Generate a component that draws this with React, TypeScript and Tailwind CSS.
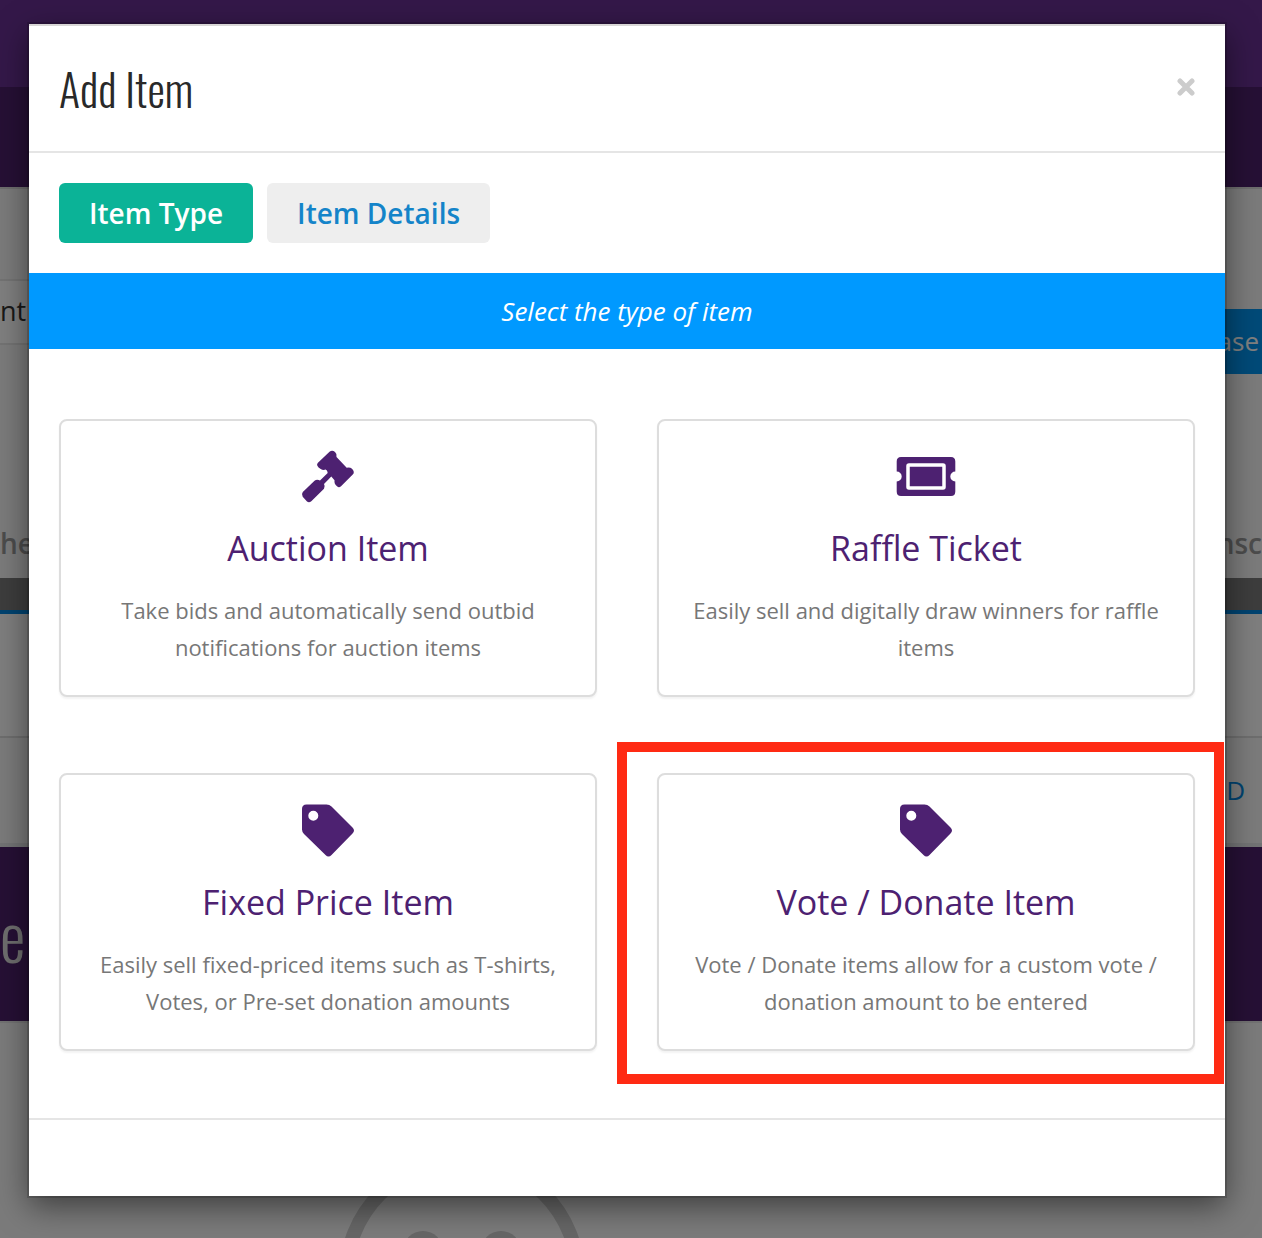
import type { ReactNode } from 'react';

function GavelIcon() {
  return (
    <svg viewBox="0 0 60 60" className="size-[60px]" fill="currentColor" aria-hidden="true">
      <path d="M31.500 4.700Q34.300 2.500 37 5Q39.500 7.300 38.500 10L48.700 20.700Q52 20 54 21.700Q57 25 55 27.300L43 39.300Q41 41 39 39.300Q36 37 36.500 33.200L33.300 29.500L26 37Q27.500 39.500 26 41.700L13.300 54.300Q11 56 9 54.500L4.700 49.700Q3 47.500 4.800 45L16.500 33.700Q19 31.800 22 33.500L29.700 26Q29.500 23.500 27.700 22.600Q25 23.500 22.700 22Q17.500 18.700 19.700 16Z" />
    </svg>
  );
}

function TicketIcon() {
  return (
    <svg viewBox="0 0 60 60" className="size-[60px]" fill="currentColor" aria-hidden="true">
      <path d="M5 10H55Q59.300 10 59.300 14.500V24.500A5 5 0 0 0 59.300 34.500V44.500Q59.300 49 55 49H5Q.700 49 .700 44.500V34.500A5 5 0 0 0 .700 24.500V14.500Q.700 10 5 10Z" />
      <rect x="12" y="18" width="36" height="23" rx="1" fill="none" stroke="#fff" strokeWidth="3.500" />
    </svg>
  );
}

function TagIcon() {
  return (
    <svg viewBox="0 0 60 60" className="size-[60px]" fill="currentColor" aria-hidden="true">
      <path
        fillRule="evenodd"
        d="M8.500 3.500H28.500Q31.500 3.500 33.500 5.500L54.500 26.500Q57.500 29.500 54.500 32.500L33.500 54Q30.500 57 27.500 54L6 33Q4 31 4 28.500V8Q4 3.500 8.500 3.500ZM15.300 9.800A5 5 0 1 0 15.300 19.800A5 5 0 1 0 15.300 9.800Z"
      />
    </svg>
  );
}

type ItemCardProps = {
  icon: ReactNode;
  title: string;
  description: string;
  highlighted?: boolean;
};

function ItemCard({ icon, title, description, highlighted }: ItemCardProps) {
  return (
    <div className="relative">
      <button
        type="button"
        className="flex h-full w-full flex-col items-center rounded-lg border-2 border-[#ddd] bg-white px-7 pt-[26px] pb-[29px] text-center shadow-[0_2px_2px_rgba(0,0,0,0.05)]"
      >
        <span className="text-[#4d2171]">{icon}</span>
        <span className="mt-[18px] text-[34px] leading-[47px] text-[#4d2171]">{title}</span>
        <span className="mt-5 text-[22px] leading-[37px] text-[#777]">{description}</span>
      </button>
      {highlighted && (
        <div className="pointer-events-none absolute -top-[31px] -right-[29px] -bottom-[33px] -left-10 border-10 border-[#ff2a13]"></div>
      )}
    </div>
  );
}

function BackgroundPage() {
  return (
    <div className="bg-[#f6f6f6] text-[26px]" aria-hidden="true">
      <div className="h-[87px] bg-[#683092]"></div>
      <div className="h-[100px] bg-[#4c206a]"></div>
      <div className="flex h-[391px] flex-col border-t-2 border-[#ddd]">
        <div className="mt-[90px] flex items-start justify-between">
          <div className="flex h-[66px] w-1/3 items-center border-y-2 border-[#e7e7e7] bg-white pb-0.5 text-[27px] text-[#333]">
            nt
          </div>
          <div className="mt-[30px] flex h-[65px] w-1/3 items-center justify-end bg-[#0094f0] pr-[3px] font-medium text-white">
            ase
          </div>
        </div>
        <div className="mt-auto flex justify-between text-[28px] leading-[70px] font-semibold text-[#999]">
          <span>he</span>
          <span>nsc</span>
        </div>
      </div>
      <div className="h-9 border-b-4 border-[#0087e0] bg-[#7a7a7a]"></div>
      <div className="h-[124px] border-b-2 border-[#ddd] bg-[#fdfdfd]"></div>
      <div className="flex h-[109px] items-center justify-end border-b-4 border-[#e4e6e8] pr-[17px] text-[#0087e0]">D</div>
      <div className="flex h-[174px] items-center bg-[#4c206a] font-['Oswald',sans-serif] text-[64px] font-light text-[#ddd]">
        <span>e</span>
      </div>
      <div className="h-[217px] overflow-hidden border-t-2 border-[#e4e4e4] pt-[130px] pl-[339px]">
        <svg viewBox="0 0 246 246" className="size-[246px]">
          <circle cx="123" cy="123" r="116" fill="none" stroke="#ccc" strokeWidth="14" />
          <circle cx="84" cy="98" r="20" fill="#ccc" />
          <circle cx="162" cy="98" r="20" fill="#ccc" />
        </svg>
      </div>
    </div>
  );
}

export default function App() {
  return (
    <div className="relative min-h-screen overflow-hidden bg-[#f6f6f6] font-['Open_Sans',sans-serif]">
      <BackgroundPage />

      <div className="absolute inset-0 bg-black/50 pt-6 pr-[37px] pl-[29px]">
        <div
          role="dialog"
          aria-modal="true"
          aria-labelledby="add-item-title"
          className="bg-white shadow-[0_0_0_2px_rgba(0,0,0,0.15),0_10px_30px_rgba(0,0,0,0.5)]"
        >
          <header className="flex h-[129px] items-center justify-between border-y-2 border-t-[#d8d6d6] border-b-[#e5e5e5] px-[30px]">
            <h1 id="add-item-title" className="font-['Oswald',sans-serif] text-[44px] font-light text-[#292929]">
              Add Item
            </h1>
            <button type="button" aria-label="Close" className="pb-1 text-[#ccc]">
              <svg viewBox="0 0 18 18" className="size-[18px]" stroke="currentColor" strokeWidth="5" strokeLinecap="round">
                <path d="M3 3L15 15M15 3L3 15" />
              </svg>
            </button>
          </header>

          <nav className="flex gap-[14px] p-[30px] text-[28px] leading-[60px] font-semibold">
            <button type="button" className="rounded-md bg-[#0bb397] px-[30px] text-white">
              Item Type
            </button>
            <button type="button" className="rounded-md bg-[#eee] px-[30px] text-[#1484c9]">
              Item Details
            </button>
          </nav>

          <p className="bg-[#0099ff] text-center text-[26px] leading-[76px] text-white italic">Select the type of item</p>

          <div className="grid grid-cols-2 gap-x-[60px] gap-y-[76px] px-[30px] pt-[70px] pb-[67px]">
            <ItemCard
              icon={<GavelIcon />}
              title="Auction Item"
              description="Take bids and automatically send outbid notifications for auction items"
            />
            <ItemCard
              icon={<TicketIcon />}
              title="Raffle Ticket"
              description="Easily sell and digitally draw winners for raffle items"
            />
            <ItemCard
              icon={<TagIcon />}
              title="Fixed Price Item"
              description="Easily sell fixed-priced items such as T-shirts, Votes, or Pre-set donation amounts"
            />
            <ItemCard
              icon={<TagIcon />}
              title="Vote / Donate Item"
              description="Vote / Donate items allow for a custom vote / donation amount to be entered"
              highlighted
            />
          </div>

          <footer className="h-[78px] border-t-2 border-[#e5e5e5]"></footer>
        </div>
      </div>
    </div>
  );
}
